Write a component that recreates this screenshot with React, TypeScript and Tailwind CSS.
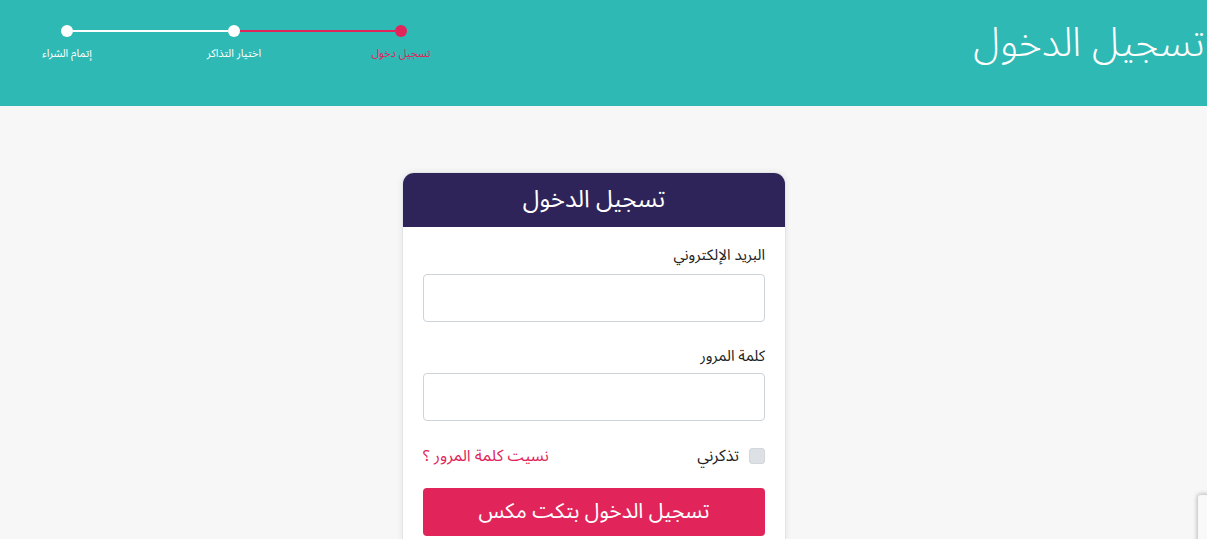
import React from 'react';

const font = { fontFamily: '"Noto Sans Arabic", "Noto Sans", "DejaVu Sans", sans-serif' };

function Stepper() {
    const steps = [
        { label: 'إتمام الشراء', active: false },
        { label: 'اختيار التذاكر', active: false },
        { label: 'تسجيل دخول', active: true },
    ];
    return (
        <div dir="ltr" className="pt-[25px] pl-[17px]">
            <div className="flex items-center pl-[44px]">
                <span className="w-3 h-3 rounded-full bg-white" />
                <span className="w-[155px] h-[2px] bg-white" />
                <span className="w-3 h-3 rounded-full bg-white" />
                <span className="w-[155px] h-[2px] bg-[#e1255a]" />
                <span className="w-3 h-3 rounded-full bg-[#e1255a]" />
            </div>
            <div className="flex gap-[67px] mt-[9px]">
                {steps.map(s => (
                    <div
                        key={s.label}
                        className={`w-[100px] text-center text-[11px] leading-4 ${s.active ? 'text-[#e1255a]' : 'text-white'}`}
                    >
                        {s.label}
                    </div>
                ))}
            </div>
        </div>
    );
}

export default function App() {
    return (
        <div dir="rtl" style={font} className="h-[539px] bg-[#f7f7f7] overflow-hidden relative">
            <header className="h-[106px] bg-[#2eb9b4] flex justify-between">
                <h1 className="text-white text-[40px] font-light leading-none pt-[24px] pr-[2px]">تسجيل الدخول</h1>
                <Stepper />
            </header>

            <main className="flex justify-center pt-[66px] pr-[19px]">
                <div className="w-[384px] bg-white rounded-t-[12px] border border-[#e2e5e8] shadow-[0_0_6px_rgba(0,0,0,0.08)] overflow-hidden">
                    <div className="h-[54px] bg-[#2e2459] text-white text-[24px] flex items-center justify-center">
                        تسجيل الدخول
                    </div>
                    <form className="px-[20px] pt-[17px] pb-8">
                        <label className="block text-[15px] text-[#222] mb-[7px]">البريد الإلكتروني</label>
                        <input type="email" className="w-full h-[48px] border border-[#cdd4d9] rounded-[4px] bg-white" />

                        <label className="block text-[15px] text-[#222] mt-[23px] mb-[6px]">كلمة المرور</label>
                        <input type="password" className="w-full h-[48px] border border-[#cdd4d9] rounded-[4px] bg-white" />

                        <div className="flex items-center justify-between mt-[23px]">
                            <label className="flex items-center gap-[10px] text-[16px] text-[#222]">
                                <span className="w-4 h-4 rounded-[3px] bg-[#dde1e5] border border-[#d2d7dc]" />
                                تذكرني
                            </label>
                            <a className="text-[16px] text-[#e1255a]">نسيت كلمة المرور ؟</a>
                        </div>

                        <button type="button" className="w-full h-[48px] mt-[20px] bg-[#e1255a] text-white text-[21px] rounded-[4px]">
                            تسجيل الدخول بتكت مكس
                        </button>
                    </form>
                </div>
            </main>

            <div className="absolute left-[1198px] top-[495px] w-[256px] h-[60px] bg-[#f9f9f9] rounded-[3px] shadow-[0_0_4px_1px_rgba(0,0,0,0.25)]" />
        </div>
    );
}
